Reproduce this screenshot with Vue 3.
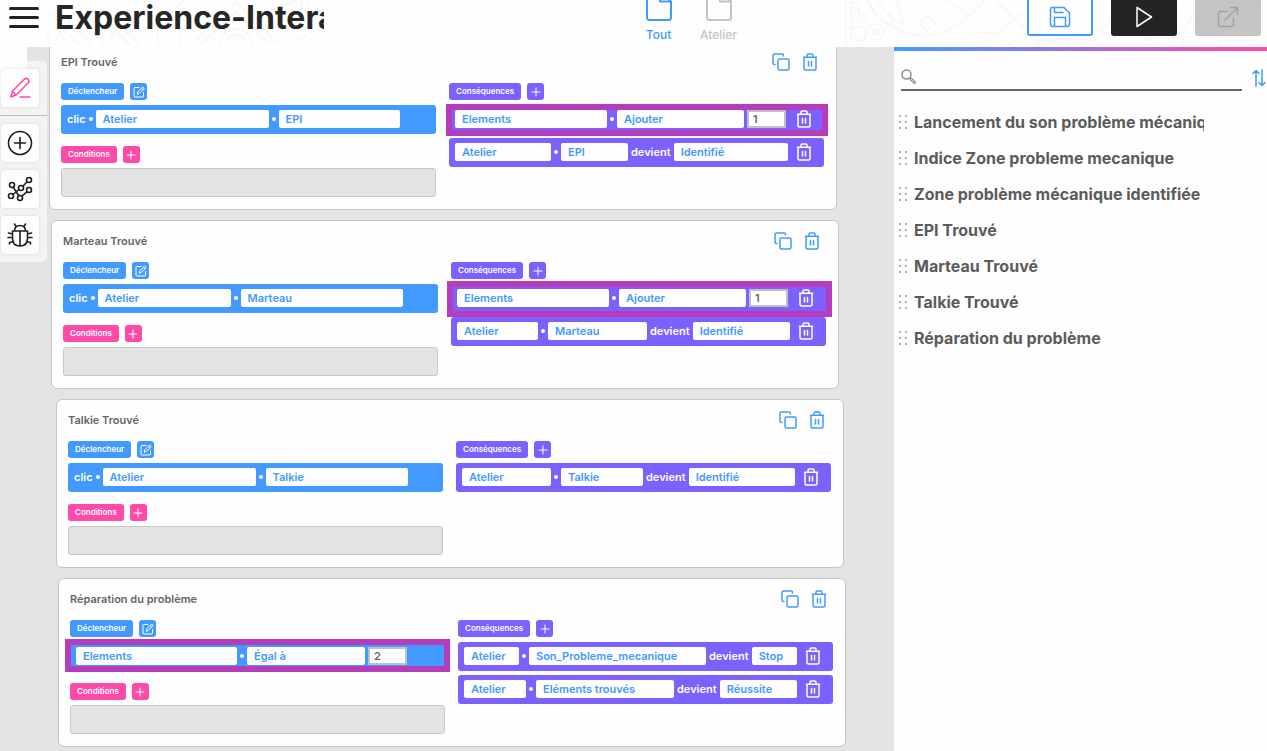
<script setup>
import { ref } from 'vue'

const search = ref('')

const f = (text, w) => ({ kind: 'field', text, w })
const n = (text) => ({ kind: 'number', text })
const t = (text) => ({ kind: 'text', text })
const dot = { kind: 'dot' }

const cards = [
  {
    title: 'EPI Trouvé',
    shift: 0,
    trigger: { parts: [t('clic'), dot, f('Atelier', 173), dot, f('EPI', 121)] },
    results: [
      { mark: '-1px -4px -2px -3px', parts: [f('Elements', 152), dot, f('Ajouter', 127), n('1')] },
      { parts: [f('Atelier', 96), dot, f('EPI', 67), t('devient'), f('Identifié', 114)] },
    ],
  },
  {
    title: 'Marteau Trouvé',
    shift: 2,
    trigger: { parts: [t('clic'), dot, f('Atelier', 133), dot, f('Marteau', 162)] },
    results: [
      { mark: '-3px -6px -4px -4px', parts: [f('Elements', 152), dot, f('Ajouter', 127), n('1')] },
      { parts: [f('Atelier', 81), dot, f('Marteau', 99), t('devient'), f('Identifié', 97)] },
    ],
  },
  {
    title: 'Talkie Trouvé',
    shift: 7,
    trigger: { parts: [t('clic'), dot, f('Atelier', 153), dot, f('Talkie', 142)] },
    results: [
      { parts: [f('Atelier', 89), dot, f('Talkie', 82), t('devient'), f('Identifié', 106)] },
    ],
  },
  {
    title: 'Réparation du problème',
    shift: 9,
    trigger: { mark: '-3px -5px -1px -5px', parts: [f('Elements', 161), dot, f('Égal à', 118), n('2')] },
    results: [
      { parts: [f('Atelier', 55), dot, f('Son_Probleme_mecanique', 177), t('devient'), f('Stop', 45)] },
      { parts: [f('Atelier', 62), dot, f('Eléments trouvés', 138), t('devient'), f('Réussite', 77)] },
    ],
  },
]

const scenarios = [
  'Lancement du son problème mécanique',
  'Indice Zone probleme mecanique',
  'Zone problème mécanique identifiée',
  'EPI Trouvé',
  'Marteau Trouvé',
  'Talkie Trouvé',
  'Réparation du problème',
]
</script>

<template>
  <div class="app">
    <svg class="defs" aria-hidden="true">
      <symbol id="i-trash" viewBox="0 0 18 18">
        <path d="M6 4V2.300Q6 1 7.300 1h3.400Q12 1 12 2.300V4M2.500 4.200h13M3 4.200v11.300Q3 17 4.500 17h9Q15 17 15 15.500V4.200M7.500 8.500v4.500M10.500 8.500v4.500" />
      </symbol>
      <symbol id="i-copy" viewBox="0 0 18 18">
        <rect x="6" y="6" width="11" height="11" rx="1.500" />
        <path d="M3 11.500H2.500Q1 11.500 1 10V2.500Q1 1 2.500 1H10Q11.500 1 11.500 2.500V3" />
      </symbol>
      <symbol id="i-edit" viewBox="0 0 12 12">
        <path d="M6 1.500H2Q1 1.500 1 2.500V10Q1 11 2 11h7.500Q10.500 11 10.500 10V6.500M4.300 7.900L4.800 5.900L9.600 1L11.200 2.500L6.400 7.400ZM8.500 2.200L10 3.700" />
      </symbol>
      <symbol id="i-plus" viewBox="0 0 12 12"><path d="M6 2v8M2 6h8" /></symbol>
      <symbol id="i-file" viewBox="0 0 26 32">
        <path d="M14 1H3.500Q1 1 1 3.500V28.500Q1 31 3.500 31h19Q25 31 25 28.500V12.500L14 1V12.500H25" />
      </symbol>
    </svg>

    <header class="topbar">
      <svg class="pattern left" viewBox="0 0 300 45" aria-hidden="true">
        <path d="M8 45V34L24 18L52 45M16 45V38L24 30L40 45M62 45V8L100 45M72 45V28L90 45M110 0L128 16L144 0M118 45V28H140V45M150 45L196 2L240 45M160 45L196 12L230 45M186 45a10 10 0 0 1 20 0M180 45a16 16 0 0 1 32 0M228 10L258 0M228 10V26L262 8V0M270 10h16M270 16h12M268 0v8M250 45L290 22" />
      </svg>
      <svg class="pattern right" viewBox="0 0 422 45" aria-hidden="true">
        <path d="M1 0V45M6 8h8v14H6ZM6 27h14v13H6ZM17 15h5v6h-5ZM6 0v3h6V0M52 38v7M22 0Q38 34 82 36Q116 30 140 0M32 0Q46 22 58 24L52 0M44 12L48 26M82 15l8 8l-8 8l-8 -8ZM102 0L122 14M128 33h28M150 0L196 45M136 45L184 8M162 45L176 36M192 45v-6h32v6M238 45L276 14L312 45M302 45V38h36v7M330 38L362 0M374 45v-5h40v5M392 0v8L420 34" />
        <circle cx="31" cy="32" r="8" /><circle class="fill" cx="31" cy="32" r="3" />
      </svg>

      <button class="menu" aria-label="Menu"><span /><span /><span /></button>
      <h1>Experience-Interactive</h1>
      <nav class="tabs">
        <a href="#tout" class="tab active"><svg><use href="#i-file" /></svg>Tout</a>
        <a href="#atelier" class="tab"><svg><use href="#i-file" /></svg>Atelier</a>
      </nav>
      <div class="actions">
        <button class="act save" aria-label="Enregistrer">
          <svg viewBox="0 0 22 22"><path d="M3.500 1.500H15L20.500 7V18.500Q20.500 20.500 18.500 20.500H3.500Q1.500 20.500 1.500 18.500V3.500Q1.500 1.500 3.500 1.500ZM5.500 20.500V11.500H16.500V20.500M5.500 1.500V6.500H14" /></svg>
        </button>
        <button class="act play" aria-label="Lire">
          <svg viewBox="0 0 22 22"><path d="M4 1.500L18.500 11L4 20.500Z" /></svg>
        </button>
        <button class="act open" aria-label="Ouvrir" disabled>
          <svg viewBox="0 0 22 22"><path d="M10 5.500H3.500Q1.500 5.500 1.500 7.500V18.500Q1.500 20.500 3.500 20.500H14.500Q16.500 20.500 16.500 18.500V12M8 14L20.500 1.500M13.500 1.500H20.500V8.500" /></svg>
        </button>
      </div>
    </header>

    <div class="body">
      <main class="board">
        <aside class="tools">
          <button class="tool pink" aria-label="Modifier">
            <svg viewBox="0 0 26 26"><path d="M4 22L5.500 16L17.500 4Q19.300 2.600 21 4.200Q22.800 6 21.300 7.800L9.500 19.800ZM5.500 16.500L9 20M13 22H23" /></svg>
          </button>
          <hr />
          <button class="tool" aria-label="Ajouter">
            <svg viewBox="0 0 26 26"><circle cx="13" cy="13" r="11.500" /><path d="M13 7.500v11M7.500 13h11" /></svg>
          </button>
          <button class="tool" aria-label="Graphe">
            <svg viewBox="0 0 26 26">
              <circle cx="22" cy="4" r="2.500" /><circle cx="5" cy="9" r="2.500" /><circle cx="14" cy="12" r="2.500" />
              <circle cx="22" cy="14" r="2.500" /><circle cx="4" cy="20" r="2.500" /><circle cx="13" cy="22" r="2.500" />
              <path d="M20.200 5.800L15.800 10.200M12 13.500L6 18.500M6.200 11.200L11.800 19.800M20 15.800L14.800 20.200" />
            </svg>
          </button>
          <button class="tool" aria-label="Débogage">
            <svg viewBox="0 0 26 26"><path d="M5.500 9H20.500V16Q20.500 24 13 24Q5.500 24 5.500 16ZM13 9V24M7.500 9Q7.500 3.500 13 3.500Q18.500 3.500 18.500 9M9 4.500L7.500 2M17 4.500L18.500 2M5.500 12L1.500 11M20.500 12L24.500 11M5.500 15.500H1M20.500 15.500H25M6.500 19.500L2.500 20.500V22M19.500 19.500L23.500 20.500V22" /></svg>
          </button>
        </aside>

        <article
          v-for="card in cards"
          :key="card.title"
          class="card"
          :style="{ marginLeft: card.shift + 'px', marginRight: 9 - card.shift + 'px' }"
        >
          <div class="head">
            <h2>{{ card.title }}</h2>
            <button class="icon" aria-label="Dupliquer"><svg><use href="#i-copy" /></svg></button>
            <button class="icon" aria-label="Supprimer"><svg><use href="#i-trash" /></svg></button>
          </div>
          <div class="cols">
            <section v-for="side in ['trigger', 'result']" :key="side">
              <div class="tags" :class="side">
                <span class="tag">{{ side === 'trigger' ? 'Déclencheur' : 'Conséquences' }}</span>
                <button class="tag sq" :aria-label="side === 'trigger' ? 'Modifier le déclencheur' : 'Ajouter une conséquence'">
                  <svg><use :href="side === 'trigger' ? '#i-edit' : '#i-plus'" /></svg>
                </button>
              </div>
              <div
                v-for="(rule, i) in side === 'trigger' ? [card.trigger] : card.results"
                :key="i"
                class="rule"
                :class="side"
              >
                <template v-for="(p, j) in rule.parts" :key="j">
                  <select v-if="p.kind === 'field'" class="field" :aria-label="p.text" :style="{ flexBasis: p.w + 'px' }">
                    <option>{{ p.text }}</option>
                  </select>
                  <input v-else-if="p.kind === 'number'" class="number" type="number" aria-label="Valeur" :value="p.text" />
                  <span v-else-if="p.kind === 'dot'" class="dot" />
                  <span v-else>{{ p.text }}</span>
                </template>
                <button v-if="side === 'result'" class="icon del" aria-label="Supprimer la conséquence">
                  <svg><use href="#i-trash" /></svg>
                </button>
                <div v-if="rule.mark" class="mark" :style="{ inset: rule.mark }" />
              </div>
              <template v-if="side === 'trigger'">
                <div class="tags condition">
                  <span class="tag">Conditions</span>
                  <button class="tag sq" aria-label="Ajouter une condition"><svg><use href="#i-plus" /></svg></button>
                </div>
                <div class="slot" />
              </template>
            </section>
          </div>
        </article>
      </main>

      <aside class="panel">
        <div class="searchrow">
          <label class="search">
            <svg viewBox="0 0 16 16" aria-hidden="true">
              <circle cx="5.500" cy="5.500" r="4.500" /><path d="M8.800 8.800L10 10" /><path class="grip" d="M10 10L13.500 13.500" /><path class="core" d="M10.300 10.300L13.300 13.300" />
            </svg>
            <input v-model="search" type="text" aria-label="Rechercher" />
          </label>
          <button class="sort" aria-label="Trier">
            <svg viewBox="0 0 14 18"><path d="M4 17V1.500M1 4.500L4 1.500L7 4.500M10 1V16.500M7 13.500L10 16.500L13 13.500" /></svg>
          </button>
        </div>
        <ul>
          <li v-for="s in scenarios" :key="s">
            <span class="handle"><i v-for="k in 6" :key="k" /></span>
            <span class="name">{{ s }}</span>
          </li>
        </ul>
      </aside>
    </div>
  </div>
</template>

<style>
body {
  margin: 0;
  overflow: hidden;
}
</style>

<style scoped>
.app {
  --blue: #429aff;
  --violet: #7c61ff;
  --pink: #ff4aa8;
  display: flex;
  flex-direction: column;
  height: 100vh;
  background: #fefefe;
  font-family: Inter, "Liberation Sans", sans-serif;
  font-size: 11px;
  font-weight: 600;
  color: #6b6461;
}
.app *,
.app *::before {
  box-sizing: border-box;
}
.defs {
  position: absolute;
  width: 0;
  height: 0;
}
svg {
  display: block;
  fill: none;
  stroke: currentColor;
  stroke-linecap: round;
  stroke-linejoin: round;
}
button {
  border: 0;
  padding: 0;
  background: none;
  color: inherit;
  font: inherit;
}

/* top bar */
.topbar {
  position: relative;
  flex: none;
  display: flex;
  align-items: flex-end;
  height: 47px;
  overflow: hidden;
}
.pattern {
  position: absolute;
  top: 0;
  height: 45px;
  stroke: #f8f8f8;
  stroke-width: 2;
}
.pattern.left {
  left: 40px;
  width: 300px;
}
.pattern.right {
  right: 0;
  width: 422px;
}
.pattern .fill {
  fill: #f8f8f8;
}
.menu {
  position: relative;
  display: grid;
  gap: 6px;
  width: 30px;
  margin: 0 16px 19px 9px;
}
.menu span {
  height: 3px;
  border-radius: 2px;
  background: #222;
}
h1 {
  position: relative;
  width: 269px;
  margin: 0 0 9px;
  overflow: hidden;
  white-space: nowrap;
  color: #262626;
  font-size: 32px;
  font-weight: 700;
  line-height: 40px;
}
.tabs {
  display: flex;
  flex: 1;
  justify-content: center;
  gap: 12px;
  padding: 0 0 4px 26px;
}
.tab {
  display: flex;
  flex-direction: column;
  align-items: center;
  gap: 6px;
  width: 48px;
  color: #c4c4c4;
  font-size: 12px;
  font-weight: 500;
  line-height: 16px;
  text-decoration: none;
}
.tab svg {
  width: 26px;
  height: 32px;
  stroke-width: 2;
}
.tab.active {
  color: var(--blue);
}
.actions {
  position: relative;
  display: flex;
  gap: 18px;
  padding: 0 6px 11px 0;
}
.act {
  display: grid;
  place-items: center;
  width: 66px;
  height: 38px;
  border-radius: 3px;
}
.act svg {
  width: 22px;
  height: 22px;
  stroke-width: 1.5;
}
.save {
  border: 2px solid var(--blue);
  background: #fefefe;
  color: var(--blue);
}
.play {
  background: #242424;
  color: #fff;
}
.open {
  background: #c4c4c4;
  color: #a2a2a2;
}

.body {
  display: flex;
  flex: 1;
  min-height: 0;
}

/* board, shown scrolled to its end */
.board {
  position: relative;
  flex: 1;
  display: flex;
  flex-direction: column;
  justify-content: flex-end;
  gap: 10px;
  min-width: 0;
  padding: 0 48px 4px 49px;
  overflow: hidden;
  background: #e4e4e4;
}
.tools {
  position: absolute;
  top: 14px;
  left: 0;
  display: flex;
  flex-direction: column;
  gap: 8px;
  width: 47px;
  padding: 8px 0 8px 1px;
  border-radius: 0 5px 5px 0;
  background: #f3f3f3;
}
.tools::before {
  content: "";
  position: absolute;
  top: -14px;
  left: 0;
  width: 27px;
  height: 52px;
  background: #fefefe;
}
.tools hr {
  width: 47px;
  height: 1px;
  margin: 0 0 0 -1px;
  border: 0;
  background: #bdbdbd;
}
.tool {
  position: relative;
  display: grid;
  place-items: center;
  width: 38px;
  height: 38px;
  border-radius: 4px;
  background: #fefefe;
  box-shadow: 0 0 3px #0002;
  color: #1f1f1f;
}
.tool svg {
  width: 26px;
  height: 26px;
  stroke-width: 1.6;
}
.tool.pink {
  color: var(--pink);
}
.card {
  flex: none;
  padding: 0 12px 12px 11px;
  border: 1px solid #c6c6c6;
  border-radius: 6px;
  background: #fefefe;
}
.head {
  display: flex;
  align-items: center;
  gap: 11px;
  height: 40px;
  margin-bottom: 1px;
  padding-right: 5px;
}
h2 {
  flex: 1;
  margin: 0;
  font-size: 11px;
  font-weight: 600;
}
.icon {
  width: 18px;
  height: 18px;
  color: var(--blue);
}
.icon svg {
  width: 18px;
  height: 18px;
  stroke-width: 1.5;
}
.cols {
  display: grid;
  grid-template-columns: 1fr 1fr;
  gap: 13px;
}
.tags {
  display: flex;
  gap: 6px;
  margin-bottom: 5px;
}
.tags.condition {
  margin-top: 12px;
}
.tag {
  height: 17px;
  padding: 0 7px;
  border-radius: 3px;
  color: #fff;
  font-size: 8px;
  line-height: 17px;
}
.tag.sq {
  display: grid;
  place-items: center;
  width: 17px;
  padding: 0;
}
.tag svg {
  width: 12px;
  height: 12px;
}
.trigger .tag,
.rule.trigger {
  background: var(--blue);
}
.result .tag,
.rule.result {
  background: var(--violet);
}
.condition .tag {
  background: var(--pink);
}
.rule {
  position: relative;
  display: flex;
  align-items: center;
  gap: 3px;
  height: 29px;
  padding: 0 11px 1px 6px;
  border-radius: 3px;
  color: #fff;
}
.rule + .rule {
  margin-top: 4px;
}
.field {
  appearance: none;
  flex: 0 1 auto;
  min-width: 0;
  height: 18px;
  padding: 0 0 1px 7px;
  border: 0;
  border-radius: 2px;
  background: #fefefe;
  color: var(--blue);
  font: inherit;
}
.number {
  appearance: textfield;
  width: 39px;
  height: 18px;
  padding: 0 4px;
  border: 2px solid #c0c0c0;
  background: #fefefe;
  color: #6b6461;
  font: inherit;
}
.dot {
  flex: none;
  width: 4px;
  height: 4px;
  border-radius: 50%;
  background: #fff;
}
.del {
  margin-left: auto;
  color: #fff;
}
.mark {
  position: absolute;
  border: 6px solid #b53cbb;
  pointer-events: none;
}
.slot {
  height: 29px;
  border: 1px solid #c8c8c8;
  border-radius: 3px;
  background: #e3e3e3;
}

/* right panel */
.panel {
  flex: none;
  width: 373px;
}
.panel::before {
  content: "";
  display: block;
  height: 4px;
  background: linear-gradient(90deg, var(--blue), var(--pink));
}
.searchrow {
  display: flex;
  gap: 10px;
  height: 40px;
  padding-left: 7px;
}
.search {
  display: flex;
  flex: 1;
  align-items: flex-end;
  min-width: 0;
  border-bottom: 2px solid #6b6461;
}
.search svg {
  width: 16px;
  height: 16px;
  margin-bottom: 4px;
  stroke: #8f8f8f;
  stroke-width: 1.5;
}
.search .grip {
  stroke-width: 3;
}
.search .core {
  stroke: #e4e4e4;
  stroke-width: 1;
}
.search input {
  flex: 1;
  min-width: 0;
  border: 0;
  outline: 0;
  background: none;
  font: inherit;
}
.sort {
  align-self: flex-end;
  margin: 0 1px 4px 0;
  color: var(--blue);
}
.sort svg {
  width: 14px;
  height: 18px;
  stroke-width: 1.5;
}
ul {
  margin: 13px 0 0;
  padding: 0 0 0 5px;
  list-style: none;
}
li {
  display: flex;
  align-items: center;
  gap: 7px;
  height: 36px;
}
.handle {
  display: grid;
  grid-template-columns: 2px 2px;
  gap: 4px;
}
.handle i {
  width: 2px;
  height: 2px;
  background: #b4b4b4;
}
.name {
  width: 290px;
  overflow: hidden;
  white-space: nowrap;
  color: #5b5b5b;
  font-size: 16px;
  font-weight: 700;
  line-height: 24px;
}
</style>
